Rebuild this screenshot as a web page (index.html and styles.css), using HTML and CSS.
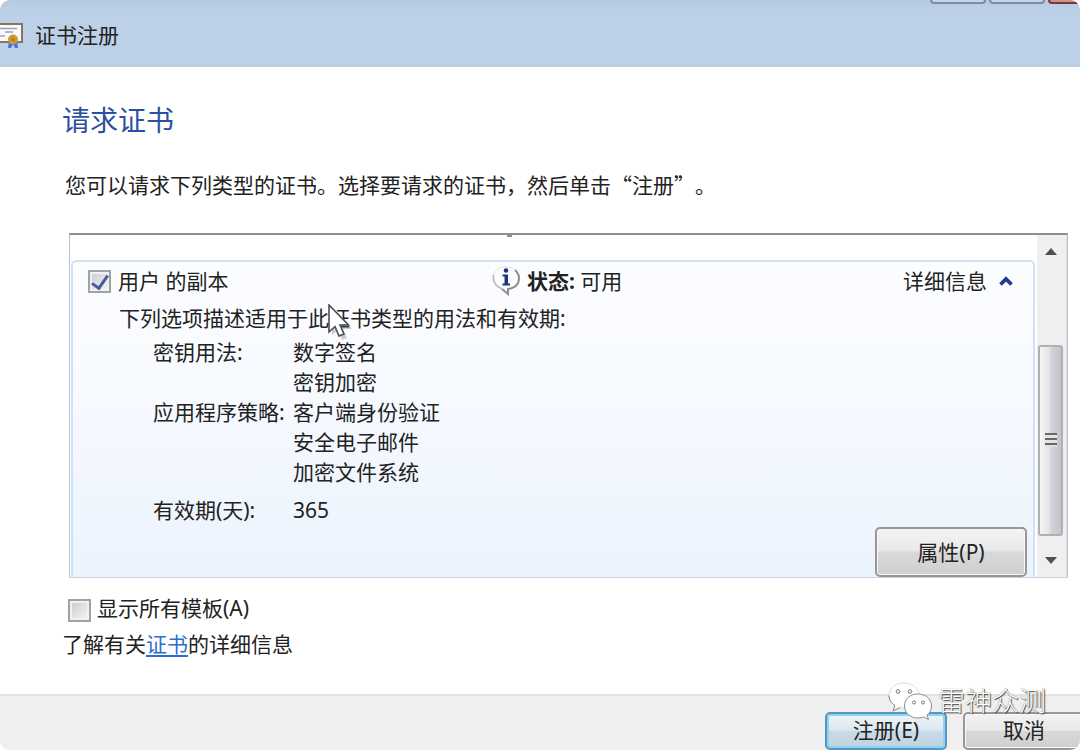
FILE: index.html
```html
<!DOCTYPE html>
<html lang="zh-CN">
<head>
<meta charset="utf-8">
<title>证书注册</title>
<link rel="stylesheet" href="styles.css">
</head>
<body>
<div class="window">
  <header class="titlebar">
    <svg class="cert-icon" viewBox="0 0 23 26" aria-hidden="true">
      <rect x="-8" y="2" width="30" height="18" fill="#fbfaf8" stroke="#857563" stroke-width="2"/>
      <path d="M0 6.500h17M5 10h8M0 14h5" stroke="#9a9fc8" stroke-width="1.500"/>
      <path d="M9 19l-1 7h3l2-4 2 4h3l-1-7z" fill="#3f75df"/>
      <circle cx="13" cy="17.500" r="5" fill="#cf9c32"/>
      <circle cx="13" cy="17.500" r="2" fill="#b9811d"/>
    </svg>
    <span class="title">证书注册</span>
    <div class="controls">
      <button class="control" type="button" aria-label="最小化"></button>
      <button class="control" type="button" aria-label="最大化"></button>
      <button class="control close" type="button" aria-label="关闭"></button>
    </div>
  </header>

  <main class="page">
    <h1 class="heading">请求证书</h1>
    <p class="intro">您可以请求下列类型的证书。选择要请求的证书，然后单击“注册”。</p>

    <section class="list">
      <div class="viewport">
        <span class="clipped-mark"></span>
        <article class="card">
          <div class="card-head">
            <label class="check"><input class="box" type="checkbox" checked>用户 的副本</label>
            <div class="status">
              <svg class="info-icon" viewBox="0 0 28 30" aria-hidden="true">
                <path d="M14 1C6 1 1 6 1 12.500c0 5 4 9 9 10.500l5 5 1-5c6-1 11-5 11-10.500C27 6 22 1 14 1z" fill="#fdfdfe" stroke="#e2e2e6"/>
                <path d="M1.500 9c-1 7 2 11 8.500 14" fill="none" stroke="#b9bac0" stroke-width="1.600"/>
                <path d="M10 23l6 5v-5c7-1 11-5 11-11 0-3-2-6-4-8" fill="none" stroke="#8f9097" stroke-width="2"/>
                <circle cx="14" cy="4.500" r="2.300" fill="#203382"/>
                <path d="M10.500 8.500h5.500v9h2v2h-7.500v-2h2v-7h-2z" fill="#203382"/>
              </svg>
              <span><b>状态:</b> 可用</span>
            </div>
            <button class="details" type="button">详细信息
              <svg class="chevron" viewBox="0 0 14 10" aria-hidden="true"><path d="M1.500 8.500L7 3l5.500 5.500" fill="none" stroke="#203b94" stroke-width="3.800"/></svg>
            </button>
          </div>
          <p class="desc">下列选项描述适用于此证书类型的用法和有效期:</p>
          <dl class="props">
            <dt>密钥用法:</dt>
            <dd>数字签名</dd>
            <dd>密钥加密</dd>
            <dt>应用程序策略:</dt>
            <dd>客户端身份验证</dd>
            <dd>安全电子邮件</dd>
            <dd>加密文件系统</dd>
            <dt class="spaced">有效期(天):</dt>
            <dd class="spaced">365</dd>
          </dl>
          <div class="card-actions"><button class="button" type="button">属性(P)</button></div>
        </article>
        <svg class="cursor" viewBox="0 0 28 38" aria-hidden="true">
          <path d="M5 5v26l6-5 4 10 5-2-4-9h9z" fill="#777" opacity=".35"/>
          <path d="M2 1v27l6-5.500L12 32l5-2-4-9h8.500z" fill="#fff" stroke="#4a4d55" stroke-width="1.600"/>
        </svg>
      </div>
      <div class="scrollbar">
        <svg class="arrow" viewBox="0 0 12 8" aria-hidden="true"><path d="M0 8l6-7 6 7z" fill="#505050"/></svg>
        <div class="track">
          <div class="thumb"><span class="grip"></span></div>
        </div>
        <svg class="arrow" viewBox="0 0 12 8" aria-hidden="true"><path d="M0 0l6 7 6-7z" fill="#505050"/></svg>
      </div>
    </section>

    <label class="check all"><input class="box" type="checkbox">显示所有模板(A)</label>
    <p class="more">了解有关<a href="#">证书</a>的详细信息</p>
  </main>

  <footer class="footer">
    <button class="button primary" type="button">注册(E)</button>
    <button class="button cancel" type="button">取消</button>
    <div class="watermark">
      <svg class="bubbles" viewBox="0 0 44 38" aria-hidden="true">
        <path d="M15.500 1C7 1 1 6.500 1 13.500c0 4 2 7.500 6 10L5 29l7-3.500c9 1.500 19-3 19-12C31 6.500 24.500 1 15.500 1z" fill="#fff" stroke="#dcdcdc"/>
        <path d="M1 13.500c0 4 2 7.500 6 10L5 29l7-3.500" fill="none" stroke="#8d8d8d"/>
        <path d="M30 12c-8 0-13.500 5-13.500 12S22 36 30 36c2 0 4-.400 5.500-1l5 2.500-1.500-4.500c3-2 4.500-5 4.500-9 0-7-6-12-13.500-12z" fill="#fff" stroke="#8d8d8d"/>
        <g fill="#fff" stroke="#777"><circle cx="10" cy="9.500" r="1.800"/><circle cx="22" cy="9.500" r="1.800"/><circle cx="26" cy="20.500" r="1.500"/><circle cx="35" cy="20.500" r="1.500"/></g>
      </svg>
      <span>雷神众测</span>
    </div>
  </footer>
</div>
</body>
</html>
```

FILE: styles.css
```css
* { box-sizing: border-box; }

body {
  margin: 0;
  background: #fff;
  color: #222;
  font: 21px/30px "Noto Sans", "Noto Sans CJK SC", sans-serif;
}

h1, p, dl, dd { margin: 0; }
button { font: inherit; color: inherit; }

.window {
  display: flex;
  flex-direction: column;
  min-height: 100vh;
  border-radius: 10px;
  overflow: hidden;
  position: relative;
}

.titlebar {
  display: flex;
  align-items: center;
  gap: 12px;
  height: 67px;
  padding-top: 4px;
  background: linear-gradient(#b6c9e2, #bcd1e7 12px);
  border-bottom: 2px solid #b9cddf;
}
.cert-icon { width: 23px; height: 26px; }
.controls {
  position: absolute;
  top: -20px;
  right: -24px;
  display: flex;
  gap: 3px;
}
.control {
  width: 56px;
  height: 24px;
  background: #c5d6e9;
  border: 2px solid #7d8ca5;
  border-radius: 4px;
}
.close { background: #d58f86; border-color: #6f3a45; }

.page {
  flex: 1;
  padding: 33px 12px 32px 62px;
}
.heading {
  font-size: 28px;
  line-height: 40px;
  font-weight: 400;
  color: #2d4fa2;
}
.intro {
  margin: 29px 0 34px 3px;
  font-family: "Noto Sans CJK SC", sans-serif;
  text-spacing-trim: space-all;
}

.list {
  display: flex;
  margin-left: 7px;
  border: 1px solid #b9c0d2;
  border-top: 2px solid #8d8e93;
  border-bottom-color: #c8d0de;
}
.viewport {
  flex: 1;
  position: relative;
  padding: 25px 2px 0 1px;
}
.clipped-mark {
  position: absolute;
  top: 0;
  left: 437px;
  width: 5px;
  height: 2px;
  background: #8d8e93;
}
.card {
  border: 2px solid #cfe1f8;
  border-bottom: 0;
  border-radius: 5px 5px 0 0;
  background: linear-gradient(#fcfdff, #f7faff 40%, #ebf3fd);
}
.card-head {
  display: grid;
  grid-template-columns: 404px 1fr auto;
  align-items: center;
  height: 38px;
  padding: 0 20px 0 15px;
}
.check { display: flex; align-items: center; gap: 7px; }
.box {
  appearance: none;
  display: grid;
  place-items: center;
  width: 23px;
  height: 23px;
  margin: 0;
  border: 2px solid #a0a2a5;
  background: linear-gradient(135deg, #c8cbd2, #f6f6f6);
  box-shadow: inset 0 0 0 2px #f1f1f1;
}
.box:checked::after {
  content: "";
  width: 7px;
  height: 14px;
  margin-bottom: 4px;
  border: solid #465a9c;
  border-width: 0 3px 3px 0;
  transform: rotate(35deg);
}
.status { display: flex; align-items: center; gap: 7px; }
.info-icon { width: 28px; height: 30px; }
.details {
  display: flex;
  align-items: center;
  gap: 12px;
  padding: 0;
  border: 0;
  background: none;
}
.chevron { width: 14px; height: 10px; }
.desc { padding: 0 0 1px 46px; line-height: 36px; }
.props {
  display: grid;
  grid-template-columns: 140px 1fr;
  padding-left: 80px;
}
.props dt { grid-column: 1; white-space: nowrap; }
.props dd { grid-column: 2; }
.props .spaced { margin-top: 8px; }
.card-actions { display: flex; justify-content: flex-end; padding: 2px 6px 0 0; }

.button {
  width: 152px;
  height: 50px;
  padding: 0;
  border: 2px solid #969799;
  border-radius: 5px;
  background: linear-gradient(#f3f3f3, #e8e8e8 48%, #d9d9d9 50%, #cfcfcf);
  box-shadow: inset 0 0 0 1px #f7f7f7;
}

.cursor {
  position: absolute;
  left: 257px;
  top: 69px;
  width: 28px;
  height: 38px;
}

.scrollbar {
  display: flex;
  flex-direction: column;
  align-items: center;
  width: 30px;
  padding: 12px 3px 12px 1px;
  background: #efefef;
  border-right: 1px solid #dcdee5;
}
.arrow { width: 12px; height: 8px; }
.track {
  flex: 1;
  display: flex;
  flex-direction: column;
  justify-content: flex-end;
  width: 100%;
  padding-bottom: 21px;
}
.thumb {
  display: grid;
  place-items: center;
  height: 68%;
  border: 2px solid #b0b1b4;
  border-radius: 3px;
  background: linear-gradient(90deg, #f6f6f6, #e6e6e8 40%, #d1d2d7 55%, #c3c4c9);
}
.grip {
  width: 12px;
  height: 14px;
  background: repeating-linear-gradient(#66686b 0 2px, #e3e3e3 2px 5px);
}

.all { margin: 15px 0 0 6px; gap: 6px; }
.all .box { margin-top: 5px; }
.more { margin-top: 6px; }
.more a { color: #2a6fd0; text-underline-offset: 3px; }

.footer {
  position: relative;
  display: flex;
  justify-content: flex-end;
  gap: 16px;
  height: 56px;
  padding-top: 16px;
  background: #efefef;
  border-top: 2px solid #e2e2e2;
}
.footer .button { width: 122px; height: 38px; line-height: 32px; padding-bottom: 2px; }
.footer .primary {
  border-color: #5795c2;
  background: linear-gradient(#eef5f9, #dbe7ee 48%, #c9dbe6 50%, #c0d3df);
  box-shadow: inset 0 0 0 2px #8bd3f2;
}
.footer .cancel { margin-right: -5px; }
.watermark {
  position: absolute;
  top: -14px;
  right: 34px;
  display: flex;
  align-items: center;
  gap: 6px;
  color: #fff;
  font-size: 27px;
  line-height: 38px;
  font-weight: 300;
  text-shadow: 1px 1px 1px #444, 0 0 1px #666;
}
.bubbles { width: 44px; height: 38px; }
```
